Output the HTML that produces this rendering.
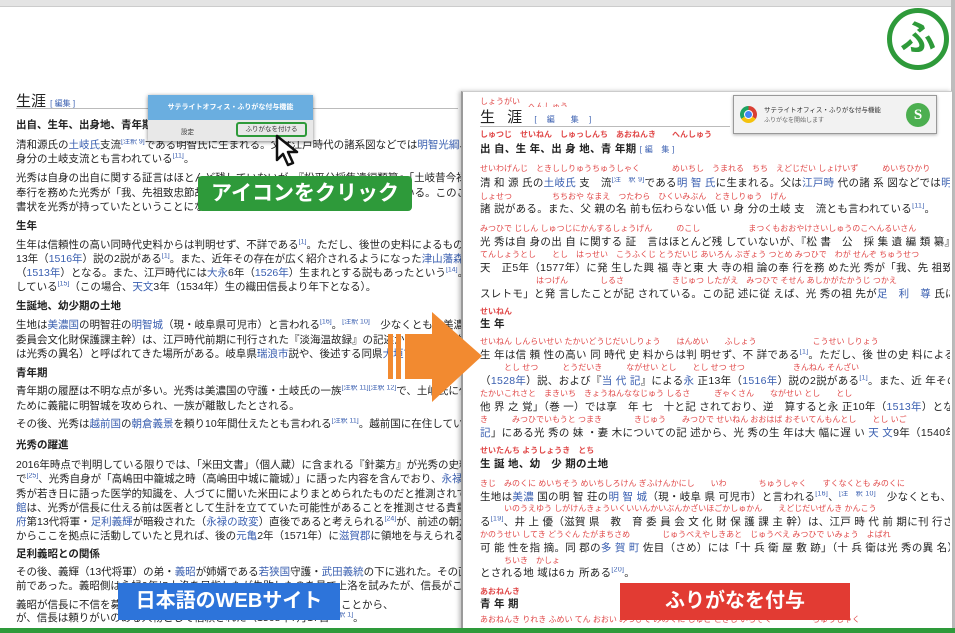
<!DOCTYPE html>
<html><head><meta charset="utf-8"><style>
*{margin:0;padding:0;box-sizing:border-box}
body{width:955px;height:633px;overflow:hidden;background:#fff;position:relative;font-family:"Liberation Sans","Noto Sans CJK JP",sans-serif;color:#222}
.a{position:absolute;white-space:nowrap;overflow:hidden}
.t{font-size:10.5px;line-height:13px}
.b{font-weight:bold}
.l{color:#3a5fb0}
.r{color:#e04848;font-size:8px;line-height:10px}
.rt{font-size:10.5px;line-height:13px;letter-spacing:0.3px}
sup{font-size:7px;color:#3a5fb0;line-height:0}
</style></head><body>
<div class="a" style="left:0;top:0;width:955px;height:7px;background:#e4e4e4;border-bottom:1px solid #ccc"></div>
<div class="a" style="left:951px;top:0;width:4px;height:633px;background:#bdbdbd"></div>

<div class="a" style="left:16px;top:90px;font-size:15px">生涯 <span style="font-size:8px;color:#3a5fb0">[ 編集 ]</span></div>
<div class="a" style="left:16px;top:108px;width:442px;height:1px;background:#bbb"></div>
<div class="a t b" style="left:16px;top:119px">出自、生年、出身地、青年期</div>
<div class="a t" style="left:16px;top:139px;width:445px">清和源氏の<span class="l">土岐氏</span>支流<sup>[注釈 9]</sup>である明智氏に生まれる。父は江戸時代の諸系図などでは<span class="l">明智光綱</span>、<span class="l">明智光国</span>、</div>
<div class="a t" style="left:16px;top:153px">身分の土岐支流とも言われている<sup>[11]</sup>。</div>
<div class="a t" style="left:16px;top:172px;width:445px">光秀は自身の出自に関する証言はほとんど残していないが、『松平公採集遺編類纂』「土岐昔今禄」</div>
<div class="a t" style="left:16px;top:187px;width:445px">奉行を務めた光秀が「我、先祖致忠節故、過分御恩浴」と発言したことが記されている。このことから</div>
<div class="a t" style="left:16px;top:201px">書状を光秀が持っていたということになる<sup>[1]</sup></div>
<div class="a t b" style="left:16px;top:220px">生年</div>
<div class="a t" style="left:16px;top:239px;width:445px">生年は信頼性の高い同時代史料からは判明せず、不詳である<sup>[1]</sup>。ただし、後世の史料によるものとして、『明</div>
<div class="a t" style="left:16px;top:253px;width:445px">13年（<span class="l">1516年</span>）説の2説がある<sup>[1]</sup>。また、近年その存在が広く紹介されるようになった<span class="l">津山藩森家</span>の記録であ</div>
<div class="a t" style="left:16px;top:267px;width:445px">（<span class="l">1513年</span>）となる。また、江戸時代には<span class="l">大永</span>6年（<span class="l">1526年</span>）生まれとする説もあったという<sup>[14]</sup>。一方、<span class="l">橋場</span></div>
<div class="a t" style="left:16px;top:281px">している<sup>[15]</sup>（この場合、<span class="l">天文</span>3年（1534年）生の織田信長より年下となる）。</div>
<div class="a t b" style="left:16px;top:300px">生誕地、幼少期の土地</div>
<div class="a t" style="left:16px;top:319px;width:445px">生地は<span class="l">美濃国</span>の明智荘の<span class="l">明智城</span>（現・岐阜県可児市）と言われる<sup>[16]</sup>。<sup>[注釈 10]</sup>　少なくとも、美濃国（岐阜県</div>
<div class="a t" style="left:16px;top:334px;width:445px">委員会文化財保護課主幹）は、江戸時代前期に刊行された『淡海温故録』の記述から、光秀の生地は近江国</div>
<div class="a t" style="left:16px;top:348px;width:445px">は光秀の異名）と呼ばれてきた場所がある。岐阜県<span class="l">瑞浪市</span>説や、後述する同県<span class="l">大垣市上石津町</span>説もある。</div>
<div class="a t b" style="left:16px;top:367px">青年期</div>
<div class="a t" style="left:16px;top:385px;width:445px">青年期の履歴は不明な点が多い。光秀は美濃国の守護・土岐氏の一族<sup>[注釈 11][注釈 12]</sup>で、土岐氏に代わって美</div>
<div class="a t" style="left:16px;top:400px">ために義龍に明智城を攻められ、一族が離散したとされる。</div>
<div class="a t" style="left:16px;top:418px;width:445px">その後、光秀は<span class="l">越前国</span>の<span class="l">朝倉義景</span>を頼り10年間仕えたとも言われる<sup>[注釈 11]</sup>。越前国に在住していた傍証は、</div>
<div class="a t b" style="left:16px;top:439px">光秀の躍進</div>
<div class="a t" style="left:16px;top:459px;width:445px">2016年時点で判明している限りでは、「米田文書」（個人蔵）に含まれる『針薬方』が光秀の史料上の初見で</div>
<div class="a t" style="left:16px;top:473px;width:445px">で<sup>[25]</sup>、光秀自身が「高嶋田中籠城之時（高嶋田中城に籠城）」に語った内容を含んでおり、<span class="l">永禄</span>9年10月20日</div>
<div class="a t" style="left:16px;top:488px;width:445px">秀が若き日に語った医学的知識を、人づてに聞いた米田によりまとめられたものだと推測されており、<span class="l">出座</span>や</div>
<div class="a t" style="left:16px;top:502px;width:445px"><span class="l">館</span>は、光秀が信長に仕える前は医者として生計を立てていた可能性があることを推測させる貴重な資料だとし</div>
<div class="a t" style="left:16px;top:516px;width:445px"><span class="l">府</span>第13代将軍・<span class="l">足利義輝</span>が暗殺された（<span class="l">永禄の政変</span>）直後であると考えられる<sup>[24]</sup>が、前述の朝倉義景仕官時</div>
<div class="a t" style="left:16px;top:530px;width:445px">からここを拠点に活動していたと見れば、後の<span class="l">元亀</span>2年（1571年）に<span class="l">滋賀郡</span>に領地を与えられるのも理解しや</div>
<div class="a t b" style="left:16px;top:548px">足利義昭との関係</div>
<div class="a t" style="left:16px;top:566px;width:445px">その後、義輝（13代将軍）の弟・<span class="l">義昭</span>が姉婿である<span class="l">若狭国</span>守護・<span class="l">武田義統</span>の下に逃れた。その直後から義昭は</div>
<div class="a t" style="left:16px;top:580px;width:445px">前であった。義昭側は永禄9年に上洛を目指したが失敗したのを見て上洛を試みたが、信長がこれを破る</div>
<div class="a t" style="left:16px;top:599px;width:445px">義昭が信長に不信を募らせ、光秀が仲介して義昭が朝倉義景を頼ったことから、</div>
<div class="a t" style="left:16px;top:612px;width:445px">が、信長は頼りがいのある人物として信頼された（1568年7月17日<sup>[注釈 1]</sup>。</div>

<div class="a" style="left:461px;top:91px;width:491px;height:542px;background:#fff;border-left:2px solid #9a9a9a;border-top:1px solid #ccc;box-shadow:-2px 0 4px rgba(0,0,0,.25)"></div>
<div class="a r" style="left:480px;top:97px">しょうがい　<span style="position:relative;top:5px">へんしゅう</span></div>
<div class="a" style="left:480px;top:106px;font-size:15px;letter-spacing:4px">生 涯 <span style="font-size:8px;color:#3a5fb0">[ 編　集 ]</span></div>
<div class="a" style="left:480px;top:126px;width:250px;height:1px;background:#bbb"></div>
<div class="a r b" style="left:480px;top:130px">しゅつじ　せいねん　しゅっしんち　あおねんき　　へんしゅう</div>
<div class="a rt b" style="left:480px;top:143px">出 自、生 年、出 身 地、青 年期 <span style="font-size:8px;color:#3a5fb0;font-weight:normal">[ 編　集 ]</span></div>
<div class="a r" style="left:480px;top:164px;width:470px">せいわげんじ　ときししりゅうちゅうしゃく　　　　めいちし　うまれる　ちち　えどじだい しょけいず　　　めいちひかり</div>
<div class="a rt" style="left:480px;top:177px;width:470px">清 和 源 氏の<span class="l">土岐氏</span> 支　流<sup>[注　釈 9]</sup>である<span class="l">明 智 氏</span>に生まれる。父は<span class="l">江戸時</span> 代の諸 系 図などでは<span class="l">明 智　光</span></div>
<div class="a r" style="left:480px;top:192px">しょせつ　　　　　ちちおや なまえ　つたわら　ひくいみぶん　ときしりゅう　げん</div>
<div class="a rt" style="left:480px;top:203px">諸 説がある。また、父 親の名 前も伝わらない低 い 身 分の土岐 支　流とも言われている<sup>[11]</sup>。</div>
<div class="a r" style="left:480px;top:224px;width:470px">みつひで じしん しゅつじにかんするしょうげん　　　のこし　　　　　　まつくもおおやけさいしゅうのこへんるいさん</div>
<div class="a rt" style="left:480px;top:236px;width:470px">光 秀は自 身の出 自 に関する 証　言はほとんど残 していないが、『松 書　公　採 集 遺 編 類 纂』</div>
<div class="a r" style="left:480px;top:250px;width:470px">てんしょうとし　　とし　はっせい　こうふくじ とうだいじ あいろん ぶぎょう つとめ みつひで　わが せんぞ ちゅうせつ</div>
<div class="a rt" style="left:480px;top:262px;width:470px">天　正5年（1577年）に発 生した興 福 寺と東 大 寺の相 論の奉 行を務 めた光 秀が「我、先 祖致忠　節</div>
<div class="a r" style="left:480px;top:276px;width:470px">　　　　　　　はつげん　　　　しるさ　　　　　　きじゅつ したがえ　みつひで そせん あしかがたかうじ つかえ</div>
<div class="a rt" style="left:480px;top:288px;width:470px">スレトモ」と発 言したことが記 されている。この記 述に従 えば、光 秀の祖 先が<span class="l">足　利　尊</span> 氏に仕 えてその</div>
<div class="a r b" style="left:480px;top:307px">せいねん</div>
<div class="a rt b" style="left:480px;top:318px">生 年</div>
<div class="a r" style="left:480px;top:337px;width:470px">せいねん しんらいせい たかいどうじだいしりょう　　はんめい　　ふしょう　　　　　　　こうせい しりょう</div>
<div class="a rt" style="left:480px;top:349px;width:470px">生 年は信 頼 性の高い 同 時代 史 料からは判 明せず、不 詳である<sup>[1]</sup>。ただし、後 世の史 料によるもの</div>
<div class="a r" style="left:480px;top:363px;width:470px">　　　とし せつ　　　とうだいき　　　ながせい とし　　とし せつ せつ　　　　　　きんねん そんざい</div>
<div class="a rt" style="left:480px;top:375px;width:470px">（<span class="l">1528年</span>）説、および『<span class="l">当 代 記</span>』による<span class="l">永</span> 正13年（<span class="l">1516年</span>）説の2説がある<sup>[1]</sup>。また、近 年その存 在が</div>
<div class="a r" style="left:480px;top:389px;width:470px">たかいこれさと　まきいち　きょうねんななじゅう しるさ　　　ぎゃくさん　　ながせい とし　　とし</div>
<div class="a rt" style="left:480px;top:401px;width:470px">他 界 之 覚」（巻 一）では享　年 七　十と記 されており、逆　算すると永 正10年（<span class="l">1513年</span>）となる。</div>
<div class="a r" style="left:480px;top:415px;width:470px">き　　　みつひでいもうと つまき　　　　きじゅう　　みつひで せいねん おおはば おそいてんもんとし　　とし いご</div>
<div class="a rt" style="left:480px;top:427px;width:470px"><span class="l">記</span>」にある光 秀の 妹 ・妻 木についての記 述から、光 秀の生 年は大 幅に遅 い <span class="l">天 文</span>9年（1540年）以</div>
<div class="a r b" style="left:480px;top:446px">せいたんち ようしょうき　とち</div>
<div class="a rt b" style="left:480px;top:458px">生 誕 地、幼　少 期の土地</div>
<div class="a r" style="left:480px;top:479px;width:470px">きじ　みのくに めいちそう めいちしろけん ぎふけんかにし　　いわ　　　　ちゅうしゃく　　すくなくとも みのくに</div>
<div class="a rt" style="left:480px;top:491px;width:470px">生地は<span class="l">美濃</span> 国の明 智 荘の<span class="l">明 智 城</span>（現・岐阜 県 可児市）と言われる<sup>[16]</sup>、<sup>[注　釈 10]</sup>　少なくとも、美濃</div>
<div class="a r" style="left:480px;top:504px;width:470px">　　　いのうえゆう しがけんきょういくいいんかいぶんかざいほごかしゅかん　　えどじだいぜんき かんこう</div>
<div class="a rt" style="left:480px;top:516px;width:470px">る<sup>[19]</sup>、井 上 優（滋賀 県　教　育 委 員 会 文 化 財 保 護 課 主 幹）は、江戸 時 代 前 期に刊 行された『淡</div>
<div class="a r" style="left:480px;top:530px;width:470px">かのうせい してき どうぐん たがまちさめ　　　　じゅうべえやしきあと　じゅうべえ みつひで いみょう　よばれ</div>
<div class="a rt" style="left:480px;top:542px;width:470px">可 能 性を指 摘。同 郡の<span class="l">多 賀 町</span> 佐目（さめ）には「十 兵 衛 屋 敷 跡」（十 兵 衛は光 秀の異 名）と呼ば</div>
<div class="a r" style="left:480px;top:556px">　　　ちいき　かしょ</div>
<div class="a rt" style="left:480px;top:567px">とされる地 域は6ヵ 所ある<sup>[20]</sup>。</div>
<div class="a r b" style="left:480px;top:587px">あおねんき</div>
<div class="a rt b" style="left:480px;top:598px">青 年 期</div>
<div class="a r" style="left:480px;top:615px;width:470px">あおねんき りれき ふめい てん おおい みつひで みのくに しゅご ときし いちぞく　　　　　ちゅうしゃく</div>

<div class="a" style="left:0;top:628px;width:955px;height:5px;background:#2e9a3a"></div>

<div class="a" style="left:148px;top:95px;width:165px;height:46px;background:#e8e8e8;box-shadow:0 1px 4px rgba(0,0,0,.5)">
 <div style="height:25px;background:#6aaee0;color:#fff;font-size:7px;font-weight:bold;text-align:center;line-height:25px">サテライトオフィス・ふりがな付与機能</div>
 <div style="position:absolute;left:33px;top:31px;font-size:6.5px;color:#333">設定</div>
 <div style="position:absolute;left:88px;top:27px;width:71px;height:15px;border:2px solid #2e9a3a;border-radius:3px;font-size:6.5px;text-align:center;line-height:11px;color:#333">ふりがなを付ける</div>
</div>
<svg class="a" style="left:274px;top:134px" width="36" height="36" viewBox="0 0 36 36"><path d="M3 2 L3 26 L9 20 L14 31 L19 29 L14 18 L23 18 Z" fill="#fff" stroke="#111" stroke-width="2.5" stroke-linejoin="round"/></svg>

<div class="a" style="left:198px;top:176px;width:214px;height:35px;background:#2e9a3a;border-radius:4px;color:#fff;font-size:21px;font-weight:bold;text-align:center;line-height:35px">アイコンをクリック</div>

<div class="a" style="left:733px;top:95px;width:204px;height:39px;background:#f2f2f2;border:1px solid #999;box-shadow:0 1px 3px rgba(0,0,0,.3)">
 <div style="position:absolute;left:6px;top:10px;width:17px;height:17px;border-radius:50%;background:conic-gradient(#d93f34 0 120deg,#f4c20d 120deg 240deg,#1da462 240deg);"><div style="position:absolute;left:4px;top:4px;width:9px;height:9px;border-radius:50%;background:#4285f4;border:1.5px solid #fff"></div></div>
 <div style="position:absolute;left:30px;top:8px;font-size:6.5px;color:#333">サテライトオフィス・ふりがな付与機能</div>
 <div style="position:absolute;left:30px;top:19px;font-size:6px;color:#666">ふりがなを開始します</div>
 <div style="position:absolute;left:172px;top:7px;width:24px;height:24px;border-radius:50%;background:#4caf50;color:#fff;font-weight:bold;font-size:15px;text-align:center;line-height:24px;font-family:'Liberation Serif',serif">S</div>
</div>

<div class="a" style="left:887px;top:8px;width:62px;height:62px;border:5px solid #2e9a3a;border-radius:50%;color:#2e9a3a;font-size:36px;font-weight:bold;text-align:center;line-height:50px">ふ</div>

<svg class="a" style="left:385px;top:310px" width="100" height="95" viewBox="0 0 100 95"><g fill="#f28a30"><rect x="3" y="24" width="5" height="45"/><rect x="11" y="24" width="5" height="45"/><rect x="20" y="24" width="30" height="45"/><path d="M47 2 L97 46 L47 92 Z"/></g></svg>

<div class="a" style="left:118px;top:583px;width:222px;height:37px;background:#2d74da;color:#fff;font-size:20px;font-weight:bold;text-align:center;line-height:37px">日本語のWEBサイト</div>
<div class="a" style="left:620px;top:583px;width:230px;height:37px;background:#e23b33;color:#fff;font-size:20px;font-weight:bold;text-align:center;line-height:37px">ふりがなを付与</div>
</body></html>
